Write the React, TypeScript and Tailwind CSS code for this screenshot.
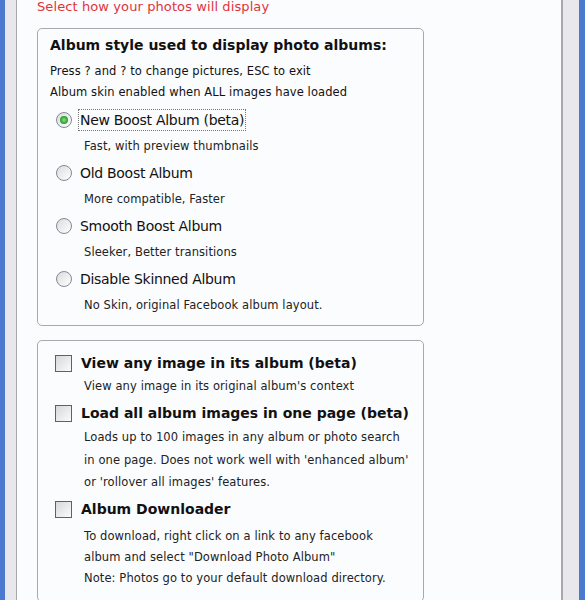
import React from "react";

const font = { fontFamily: '"DejaVu Sans", Verdana, sans-serif' };

function Radio({ checked }: { checked?: boolean }) {
  return (
    <div className="w-[16px] h-[16px] rounded-full border border-[#7d8a99] bg-gradient-to-br from-[#dcdcdc] to-[#ffffff] flex items-center justify-center shrink-0">
      {checked && (
        <div className="w-[8px] h-[8px] rounded-full bg-[radial-gradient(circle,#8ee08e_0%,#2fa52f_60%,#1f8a1f_100%)]" />
      )}
    </div>
  );
}

function Check() {
  return (
    <div className="w-[17px] h-[17px] border border-[#4c6680] bg-gradient-to-br from-[#d8d8d8] to-[#fbfbfb] shrink-0" />
  );
}

function RadioRow({ label, desc, checked }: { label: string; desc: string; checked?: boolean }) {
  return (
    <div className="flex flex-col">
      <div className="flex items-center h-[26px] pl-[18px]">
        <Radio checked={checked} />
        <span
          className={
            "ml-[7px] text-[14px] leading-[20px] text-[#111] px-[1px] tracking-[-0.3px] " +
            (checked ? "outline-1 outline-dotted outline-[#777]" : "")
          }
        >
          {label}
        </span>
      </div>
      <div className="h-[27px] flex items-center pl-[46px] text-[11.5px] text-[#222] tracking-[0.1px]">{desc}</div>
    </div>
  );
}

export default function App() {
  return (
    <div className="w-[585px] h-[600px] flex bg-white overflow-hidden" style={font}>
      <div className="w-[5px] bg-[#4b79cf]" />
      <div className="w-[11px] bg-[#e7e7ec]" />
      <div className="w-[1px] bg-[#a8a8ac]" />
      <div className="flex-1 bg-[#fbfcfe] pl-[20px] pr-[137px]">
        <div className="text-[13px] leading-[16px] text-[#e0333c] -mt-[1px] tracking-[0.1px]">
          Select how your photos will display
        </div>
        <div className="mt-[13px] h-[298px] border border-[#a9a9ad] rounded-[5px] flex flex-col">
          <div className="pt-[6px] pl-[12px]">
            <div className="text-[14px] leading-[20px] font-bold text-[#111] tracking-[0px]">
              Album style used to display photo albums:
            </div>
            <div className="text-[11.5px] leading-[22px] mt-[5px] text-[#111] tracking-[0.1px]">
              Press ? and ? to change pictures, ESC to exit
            </div>
            <div className="text-[11.5px] leading-[20px] text-[#111] tracking-[0.1px]">
              Album skin enabled when ALL images have loaded
            </div>
          </div>
          <div className="mt-[5px] flex flex-col">
            <RadioRow checked label="New Boost Album (beta)" desc="Fast, with preview thumbnails" />
            <RadioRow label="Old Boost Album" desc="More compatible, Faster" />
            <RadioRow label="Smooth Boost Album" desc="Sleeker, Better transitions" />
            <RadioRow label="Disable Skinned Album" desc="No Skin, original Facebook album layout." />
          </div>
        </div>
        <div className="mt-[14px] h-[262px] border border-[#a9a9ad] rounded-[5px] pt-[11px]">
          <div className="flex items-center h-[22px] pl-[17px]">
            <Check />
            <span className="ml-[9px] text-[14px] font-bold text-[#111] tracking-[0px]">
              View any image in its album (beta)
            </span>
          </div>
          <div className="pl-[46px] text-[11.5px] tracking-[0.1px] leading-[22px] mt-[1px] text-[#222]">
            View any image in its original album's context
          </div>
          <div className="flex items-center h-[22px] pl-[17px] mt-[5px]">
            <Check />
            <span className="ml-[9px] text-[14px] font-bold text-[#111] tracking-[0px]">
              Load all album images in one page (beta)
            </span>
          </div>
          <div className="pl-[46px] text-[11.5px] tracking-[0.1px] leading-[22.5px] mt-[2px] text-[#222]">
            <div>Loads up to 100 images in any album or photo search</div>
            <div>in one page. Does not work well with 'enhanced album'</div>
            <div>or 'rollover all images' features.</div>
          </div>
          <div className="flex items-center h-[22px] pl-[17px] mt-[5px]">
            <Check />
            <span className="ml-[9px] text-[14px] font-bold text-[#111] tracking-[0px]">
              Album Downloader
            </span>
          </div>
          <div className="pl-[46px] text-[11.5px] tracking-[0.1px] leading-[21px] mt-[5px] text-[#222]">
            <div>To download, right click on a link to any facebook</div>
            <div>album and select "Download Photo Album"</div>
            <div>Note: Photos go to your default download directory.</div>
          </div>
        </div>
      </div>
      <div className="w-[2px] bg-[#a8a8ac]" />
      <div className="w-[16px] bg-[#e7e7ec]" />
      <div className="w-[6px] bg-[#4b79cf]" />
    </div>
  );
}
